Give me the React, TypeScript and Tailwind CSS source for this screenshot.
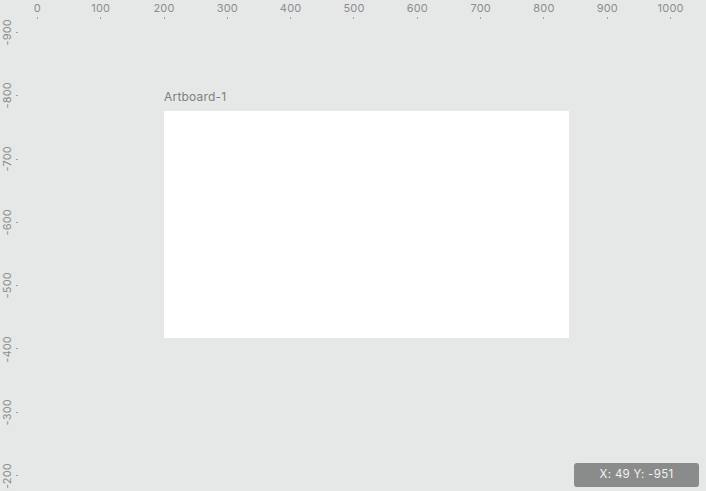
const xTicks = [0, 100, 200, 300, 400, 500, 600, 700, 800, 900, 1000];
const yTicks = [-900, -800, -700, -600, -500, -400, -300, -200];

export default function App() {
	return (
		<div
			className="relative w-[706px] h-[491px] overflow-hidden bg-[#e6e7e7] select-none"
			style={{ fontFamily: "Inter, 'Noto Sans', sans-serif" }}>
			{/* top ruler */}
			<div className="flex pl-[5.7px] h-5">
				{xTicks.map((v) => (
					<div key={v} className="w-[63.33px] shrink-0 flex flex-col items-center">
						<span className="text-[11px] leading-[15px] text-[#8b8d90] tracking-[0.2px] mt-[1px] whitespace-nowrap">{v}</span>
						<span className="w-px h-[2px] bg-[#a0a2a5] mt-[1px]" />
					</div>
				))}
			</div>

			{/* left ruler */}
			<div className="absolute left-0 top-[0.7px] flex flex-col">
				{yTicks.map((v) => (
					<div key={v} className="h-[63.33px] shrink-0 flex items-center pl-[0.5px]">
						<span className="[writing-mode:vertical-rl] rotate-180 text-[11px] leading-[12px] text-[#8b8d90] tracking-[0.2px]">
							{v}
						</span>
						<span className="ml-[3px] w-[2px] h-px bg-[#a0a2a5]" />
					</div>
				))}
			</div>

			{/* artboard */}
			<div className="absolute left-[164px] top-[89px]">
				<div className="text-[12px] leading-[16px] text-[#7d7f82] tracking-[0.2px] mb-[6px]">Artboard-1</div>
				<div className="w-[405px] h-[227px] bg-white" />
			</div>

			{/* cursor position */}
			<div className="absolute left-[574px] top-[463px] w-[125px] h-[24px] rounded-[3px] bg-[#8a8b8b] flex items-center justify-center text-[11.5px] tracking-[0.3px] text-[#f2f2f2]">
				X: 49 Y: -951
			</div>
		</div>
	);
}
